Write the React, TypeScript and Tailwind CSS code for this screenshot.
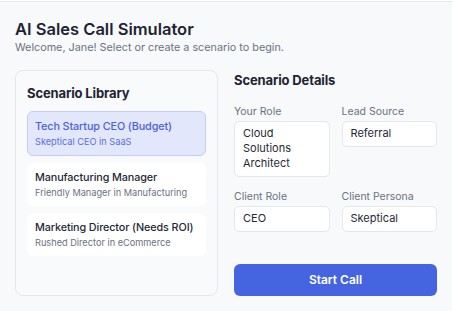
import React from "react";

const SCENARIOS = [
  { title: "Tech Startup CEO (Budget)", subtitle: "Skeptical CEO in SaaS", active: true },
  { title: "Manufacturing Manager", subtitle: "Friendly Manager in Manufacturing", active: false },
  { title: "Marketing Director (Needs ROI)", subtitle: "Rushed Director in eCommerce", active: false },
];

function Field({ label, value }: { label: string; value: string }) {
  return (
    <div className="flex flex-col">
      <span className="mb-[2px] text-[10.5px] leading-[14px] text-[#6b7280]">{label}</span>
      <div className="rounded-[5px] border border-[#e5e7eb] bg-white px-[8px] pb-[5px] pt-[4px] text-[11px] leading-[15px] text-[#1f2937]">
        {value}
      </div>
    </div>
  );
}

export default function App() {
  return (
    <div
      className="h-[311px] w-[454px] overflow-hidden bg-white pt-px"
      style={{ fontFamily: "Inter, 'Noto Sans', sans-serif" }}
    >
      <div className="h-full w-[452px] border-t border-[#e5e7eb] bg-[#f8f9fb] px-[15px] pt-[16px]">
        <h1 className="text-[16.5px] font-semibold leading-[22px] text-[#1e2433]">AI Sales Call Simulator</h1>
        <p className="text-[10.8px] leading-[16px] text-[#6b7280]">Welcome, Jane! Select or create a scenario to begin.</p>

        <div className="mt-[14px] grid grid-cols-2 gap-[16px]">
          <section className="flex h-[226px] flex-col rounded-[8px] border border-[#e5e7eb] bg-[#f9fafb] px-[11px] pt-[12px]">
            <h2 className="text-[13px] font-bold leading-[20px] tracking-[-0.01em] text-[#1e2433]">Scenario Library</h2>
            <div className="mt-[8px] flex flex-col gap-[7px]">
              {SCENARIOS.map((s) =>
                s.active ? (
                  <div
                    key={s.title}
                    className="rounded-[6px] border border-[#c3cdf6] bg-[#e2e7fb] px-[7px] py-[7px]"
                  >
                    <div className="whitespace-nowrap text-[10.8px] font-medium leading-[16px] tracking-[-0.01em] text-[#4a63d8]">{s.title}</div>
                    <div className="text-[9.2px] leading-[13px] text-[#5b6fd6]">{s.subtitle}</div>
                  </div>
                ) : (
                  <div key={s.title} className="rounded-[6px] border border-white bg-white px-[7px] py-[6px]">
                    <div className="whitespace-nowrap text-[10.8px] font-medium leading-[16px] tracking-[-0.01em] text-[#1f2937]">{s.title}</div>
                    <div className="text-[9.2px] leading-[13px] text-[#6b7280]">{s.subtitle}</div>
                  </div>
                )
              )}
            </div>
          </section>

          <section className="flex flex-col">
            <h2 className="text-[13px] font-bold leading-[20px] tracking-[-0.01em] text-[#1e2433]">Scenario Details</h2>
            <div className="mt-[15px] grid grid-cols-2 items-start gap-x-[12px] gap-y-[13px]">
              <Field label="Your Role" value="Cloud Solutions Architect" />
              <Field label="Lead Source" value="Referral" />
              <Field label="Client Role" value="CEO" />
              <Field label="Client Persona" value="Skeptical" />
            </div>
            <button
              type="button"
              className="mt-[32px] h-[32px] w-full rounded-[6px] bg-[#4564df] text-[12px] font-semibold text-white"
            >
              Start Call
            </button>
          </section>
        </div>
      </div>
    </div>
  );
}
